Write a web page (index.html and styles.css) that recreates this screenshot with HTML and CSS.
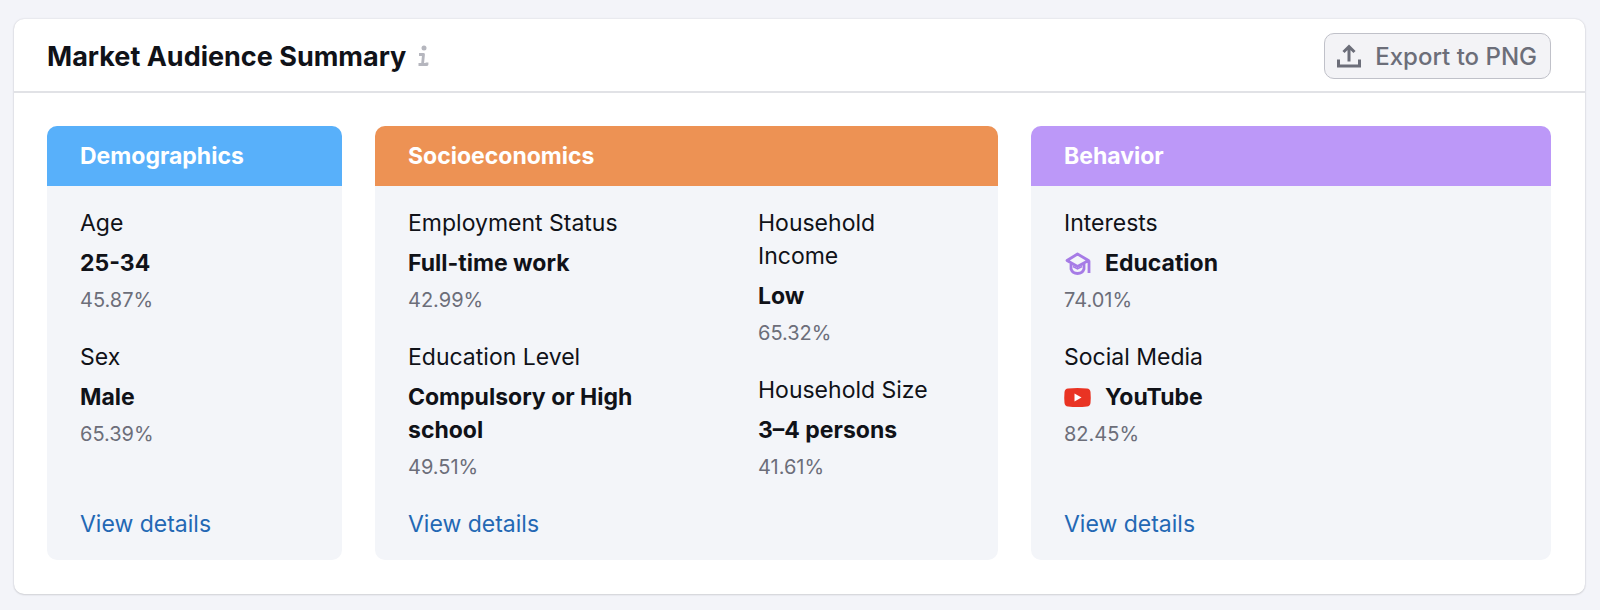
FILE: index.html
```html
<!DOCTYPE html>
<html lang="en">
<head>
    <meta charset="UTF-8">
    <meta name="viewport" content="width=device-width, initial-scale=1.0">
    <title>Market Audience Summary</title>
    <link rel="stylesheet" href="styles.css">
</head>
<body>
    <section class="card">
        <header class="card-header">
            <h1>Market Audience Summary</h1>
            <svg class="info-icon" viewBox="0 0 12 22" aria-hidden="true">
                <circle cx="7" cy="3" r="2.5" fill="currentColor"/>
                <path d="M2 9.500h4.500l-1 10M1.500 19.500h8.500v-2" fill="none" stroke="currentColor" stroke-width="2.800" stroke-linejoin="round"/>
            </svg>
            <button class="export-button" type="button">
                <svg class="export-icon" viewBox="0 0 24 24" aria-hidden="true">
                    <path d="M1.500 15.500v6.500h21v-6.500M12 17.500V3M6.500 8L12 2.500L17.500 8" fill="none" stroke="currentColor" stroke-width="3"/>
                </svg>
                Export to PNG
            </button>
        </header>

        <div class="panels">
            <article class="panel">
                <h2 class="panel-title demographics">Demographics</h2>
                <div class="panel-body">
                    <dl class="stats">
                        <div class="stat">
                            <dt>Age</dt>
                            <dd class="value">25-34</dd>
                            <dd class="percent">45.87%</dd>
                        </div>
                        <div class="stat">
                            <dt>Sex</dt>
                            <dd class="value">Male</dd>
                            <dd class="percent">65.39%</dd>
                        </div>
                    </dl>
                    <a class="details" href="#">View details</a>
                </div>
            </article>

            <article class="panel">
                <h2 class="panel-title socioeconomics">Socioeconomics</h2>
                <div class="panel-body">
                    <div class="columns">
                        <dl class="stats">
                            <div class="stat">
                                <dt>Employment Status</dt>
                                <dd class="value">Full-time work</dd>
                                <dd class="percent">42.99%</dd>
                            </div>
                            <div class="stat">
                                <dt>Education Level</dt>
                                <dd class="value">Compulsory or High school</dd>
                                <dd class="percent">49.51%</dd>
                            </div>
                        </dl>
                        <dl class="stats">
                            <div class="stat">
                                <dt>Household Income</dt>
                                <dd class="value">Low</dd>
                                <dd class="percent">65.32%</dd>
                            </div>
                            <div class="stat">
                                <dt>Household Size</dt>
                                <dd class="value">3–4 persons</dd>
                                <dd class="percent">41.61%</dd>
                            </div>
                        </dl>
                    </div>
                    <a class="details" href="#">View details</a>
                </div>
            </article>

            <article class="panel">
                <h2 class="panel-title behavior">Behavior</h2>
                <div class="panel-body">
                    <dl class="stats">
                        <div class="stat">
                            <dt>Interests</dt>
                            <dd class="value with-icon">
                                <svg class="value-icon" viewBox="0 0 27 27" aria-hidden="true">
                                    <path d="M3 10.500L13.500 4L24.500 10.500L13.500 16.500ZM25 10.500v12.500M7 14v5C9 25 18 25 20 19v-5" fill="none" stroke="#a67be6" stroke-width="2.800" stroke-linejoin="round"/>
                                    <path d="M9 16.500L13.500 19L18 16.500" fill="none" stroke="#a67be6" stroke-width="1.500"/>
                                </svg>
                                Education
                            </dd>
                            <dd class="percent">74.01%</dd>
                        </div>
                        <div class="stat">
                            <dt>Social Media</dt>
                            <dd class="value with-icon">
                                <svg class="value-icon" viewBox="0 0 27 27" aria-hidden="true">
                                    <path d="M4 4.500Q13.500 3.500 23 4.500Q26 4.800 26.500 8Q27 13.500 26.500 19Q26 22.200 23 22.500Q13.500 23.500 4 22.500Q1 22.200 .5 19Q0 13.500 .5 8Q1 4.800 4 4.500Z" fill="#e93323"/>
                                    <path d="M10.500 9.500L17.500 13.500L10.500 17.500Z" fill="#fff"/>
                                </svg>
                                YouTube
                            </dd>
                            <dd class="percent">82.45%</dd>
                        </div>
                    </dl>
                    <a class="details" href="#">View details</a>
                </div>
            </article>
        </div>
    </section>
</body>
</html>
```
FILE: styles.css
```css
* {
    box-sizing: border-box;
}
body {
    font-family: Inter, "Liberation Sans", sans-serif;
    font-size: 23px;
    line-height: 33px;
    margin: 0;
    padding: 19px 15px 16px 14px;
    background-color: #f3f4f9;
    color: #101218;
}
h1, h2, dl, dd {
    margin: 0;
}
.card {
    background-color: white;
    border-radius: 10px;
    box-shadow: 0 0 2px rgba(25,27,35,0.16), 0 1px 2px rgba(25,27,35,0.12);
}
.card-header {
    display: flex;
    align-items: center;
    padding: 14px 34px 12px 33px;
    border-bottom: 2px solid #e1e2e6;
}
.card-header h1 {
    font-size: 27px;
    font-weight: 700;
}
.info-icon {
    width: 12px;
    height: 22px;
    margin-left: 11px;
    color: #b5b6be;
}
.export-button {
    display: flex;
    align-items: center;
    gap: 14px;
    height: 46px;
    margin-left: auto;
    padding: 0 13px 0 12px;
    border: 1px solid #c0c1c9;
    border-radius: 10px;
    background-color: #f3f3f6;
    color: #6c6e79;
    font-family: inherit;
    font-size: 24px;
    font-weight: 500;
    cursor: pointer;
}
.export-icon {
    width: 24px;
    height: 24px;
}
.panels {
    display: grid;
    grid-template-columns: 295fr 623fr 520fr;
    gap: 33px;
    padding: 33px 34px 34px 33px;
}
.panel {
    display: flex;
    flex-direction: column;
    border-radius: 10px;
    background-color: #f3f5f9;
    overflow: hidden;
}
.panel-title {
    padding: 14px 33px 13px;
    color: white;
    font-size: 23px;
    font-weight: 700;
}
.demographics {
    background-color: #58b0fa;
}
.socioeconomics {
    background-color: #ed9254;
}
.behavior {
    background-color: #bc98f8;
}
.panel-body {
    display: flex;
    flex: 1;
    flex-direction: column;
    align-items: flex-start;
    justify-content: space-between;
    gap: 28px;
    padding: 21px 33px 19px;
}
.columns {
    display: grid;
    grid-template-columns: 284fr 189fr;
    gap: 66px;
    width: 100%;
    padding-right: 18px;
}
.stats {
    display: flex;
    flex-direction: column;
    gap: 28px;
}
.stat {
    display: flex;
    flex-direction: column;
    gap: 7px;
}
.value {
    font-weight: 700;
}
.with-icon {
    display: flex;
    align-items: center;
    gap: 14px;
}
.value-icon {
    width: 27px;
    height: 27px;
}
.percent {
    color: #6c6e79;
    font-size: 20px;
    line-height: 26px;
}
.details {
    color: #2368b4;
    text-decoration: none;
}
.details:hover {
    text-decoration: underline;
}
```
